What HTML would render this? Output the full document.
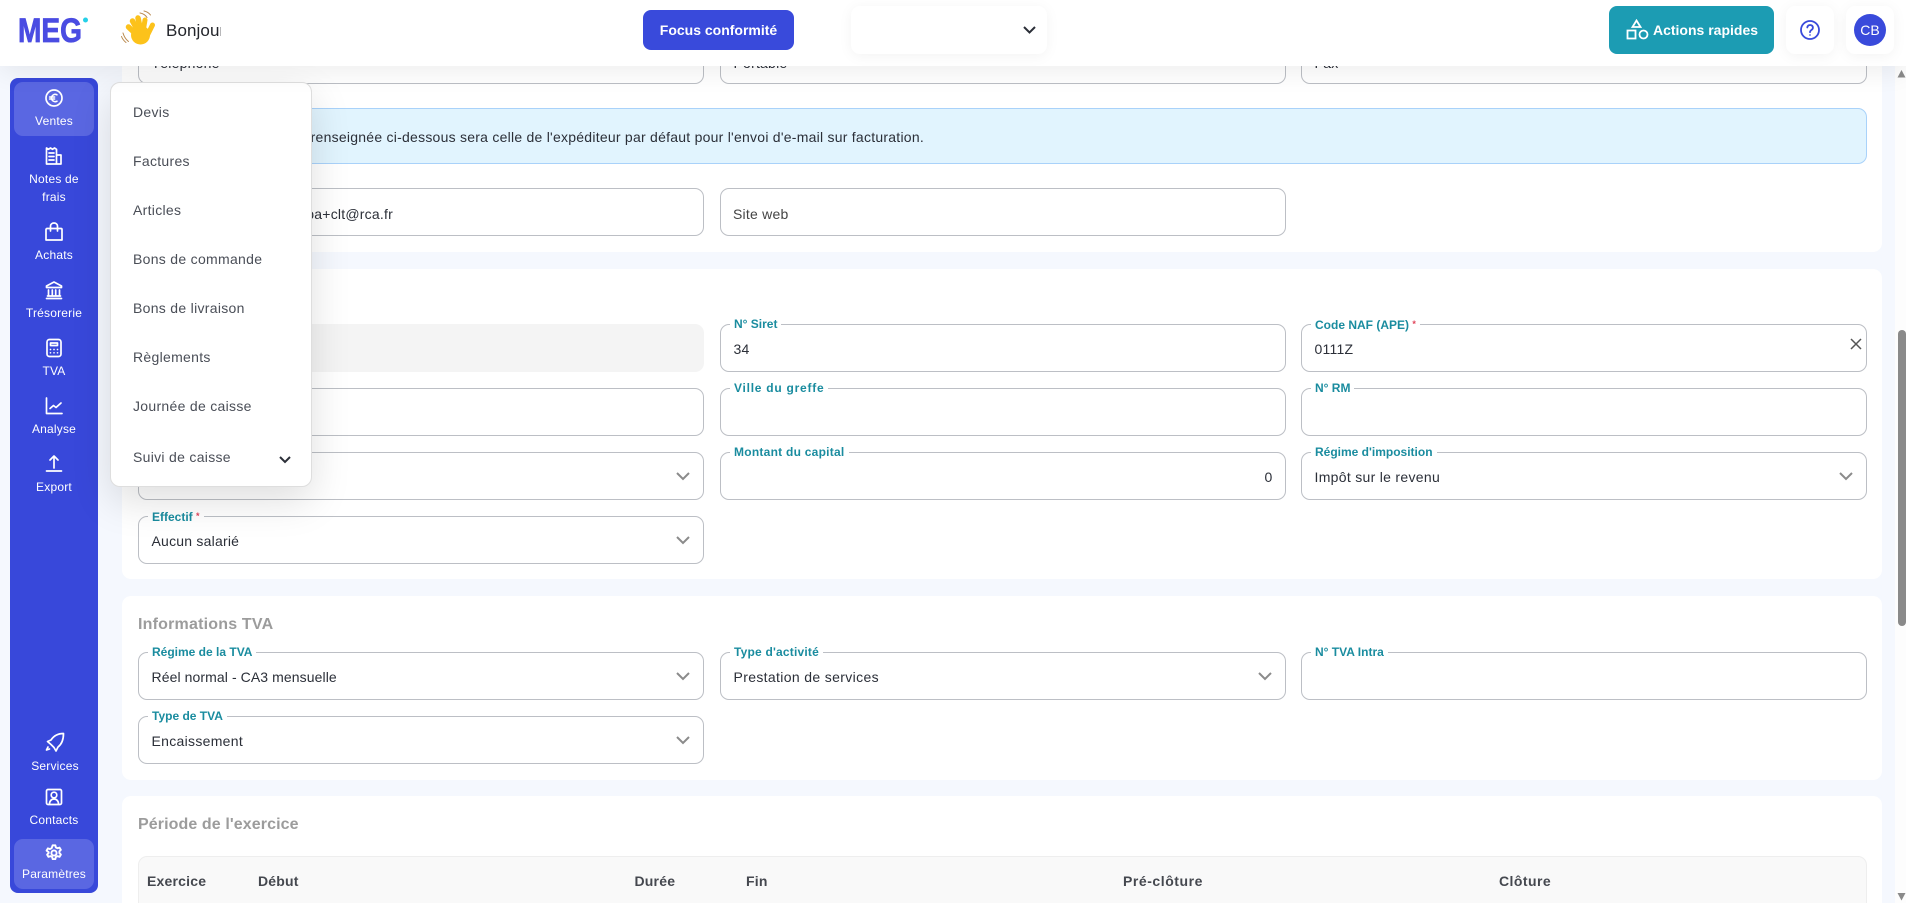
<!DOCTYPE html>
<html lang="fr">
<head>
<meta charset="utf-8">
<title>MEG</title>
<style>
*{box-sizing:border-box}
html,body{margin:0;padding:0;width:1906px;height:903px;overflow:hidden;background:#f5f8fe;font-family:"Liberation Sans",sans-serif;color:#2b2f38}
#page{position:relative;width:1906px;height:903px;overflow:hidden;background:#f5f8fe}
.a{position:absolute}
.card{position:absolute;left:122px;width:1760px;background:#fff;border-radius:9px}
.f{position:absolute;height:47.5px;width:565.5px;border:1px solid #bcbfc5;border-radius:9px;background:#fff}
.c1{left:138px}.c2{left:720px}.c3{left:1301px}
.l{position:absolute;left:9px;top:-8.5px;background:#fff;padding:0 4px;font-size:12px;line-height:15px;font-weight:700;color:#1a8c9f;white-space:nowrap}
.l i{color:#e0445a;font-style:normal;font-size:9px;vertical-align:2px}
.v{position:absolute;left:12.5px;top:14.5px;font-size:14px;line-height:18px;letter-spacing:.22px;color:#2b2f38;white-space:nowrap}
.chev{position:absolute;right:12px;top:15px}
.t{position:absolute;left:138px;font-size:16px;font-weight:700;color:#9c9c9c;line-height:20px;white-space:nowrap;letter-spacing:.2px}
.th{position:absolute;top:872px;font-size:14px;font-weight:700;color:#45484f;line-height:18px;letter-spacing:.2px}
#side{position:absolute;left:10px;top:78px;width:88px;height:815px;background:#3848da;border-radius:8px}
.act{position:absolute;left:14px;width:80px;background:#5a67e2;border-radius:9px}
.n{position:absolute;left:10px;width:88px;text-align:center;color:#fff;font-size:12px;line-height:18px;letter-spacing:.2px;white-space:nowrap}
.ic{position:absolute;fill:none;stroke:#fff;stroke-width:1.7;stroke-linecap:round;stroke-linejoin:round}
#hdr{position:absolute;left:0;top:0;width:1906px;height:66px;background:#fff;box-shadow:0 6px 26px rgba(0,0,0,.07)}
.btn{position:absolute;color:#fff;font-weight:700;font-size:14px;text-align:center;border-radius:8px;white-space:nowrap}
.wb{position:absolute;background:#fff;border-radius:9px;box-shadow:0 2px 14px rgba(0,0,0,.05)}
#menu{position:absolute;left:110px;top:82px;width:201.5px;height:404.5px;background:#fff;border:1px solid #dedede;border-radius:10px;box-shadow:0 14px 40px rgba(0,0,0,.13)}
.m{position:absolute;left:133px;font-size:14px;line-height:18px;letter-spacing:.3px;color:#4a4e57;white-space:nowrap}
</style>
</head>
<body>
<div id="page">

<!-- content cards -->
<div class="card" style="top:40px;height:212px"></div>
<div class="card" style="top:268.5px;height:310px"></div>
<div class="card" style="top:596px;height:184px"></div>
<div class="card" style="top:796px;height:120px"></div>

<!-- top row partially hidden -->
<div class="f c1" style="top:36px"><div class="v" style="top:16.5px">Téléphone</div></div>
<div class="f c2" style="top:36px"><div class="v" style="top:16.5px">Portable</div></div>
<div class="f c3" style="top:36px"><div class="v" style="top:16.5px">Fax</div></div>

<div class="a" style="left:138px;top:108px;width:1729px;height:56px;background:#e1f4fe;border:1px solid #a9d2fa;border-radius:9px"></div>
<div class="a" style="left:151px;top:128px;font-size:14px;line-height:18px;letter-spacing:.245px;color:#2b2f38;white-space:nowrap;width:773px;text-align:right">L'adresse e-mail renseignée ci-dessous sera celle de l'expéditeur par défaut pour l'envoi d'e-mail sur facturation.</div>

<div class="f c1" style="top:188px"><div class="v" style="left:auto;right:309.5px;top:15.5px">rpa+clt@rca.fr</div></div>
<div class="f c2" style="top:188px"><div class="v" style="top:16px;left:12px;color:#444">Site web</div></div>

<!-- section 2 -->
<div class="a" style="left:138px;top:324px;width:565.5px;height:47.5px;background:#f4f4f4;border-radius:9px"></div>
<div class="f c2" style="top:324px"><div class="l">N° Siret</div><div class="v">34</div></div>
<div class="f c3" style="top:324px"><div class="l">Code NAF (APE) <i>*</i></div><div class="v">0111Z</div>
 <svg class="a" style="right:3px;top:12px" width="14" height="14" viewBox="0 0 14 14" fill="none" stroke="#555" stroke-width="1.5"><path d="M2 2l10 10M12 2L2 12"/></svg></div>

<div class="f c1" style="top:388px"></div>
<div class="f c2" style="top:388px"><div class="l" style="letter-spacing:.75px">Ville du greffe</div></div>
<div class="f c3" style="top:388px"><div class="l">N° RM</div></div>

<div class="f c1" style="top:452px"><svg class="chev" width="16" height="16" viewBox="0 0 16 16" fill="none" stroke="#8b8b8b" stroke-width="2"><path d="M2 5l6 6 6-6"/></svg></div>
<div class="f c2" style="top:452px"><div class="l" style="letter-spacing:.25px">Montant du capital</div><div class="v" style="left:auto;right:12px">0</div></div>
<div class="f c3" style="top:452px"><div class="l">Régime d'imposition</div><div class="v" style="letter-spacing:.3px">Impôt sur le revenu</div><svg class="chev" width="16" height="16" viewBox="0 0 16 16" fill="none" stroke="#8b8b8b" stroke-width="2"><path d="M2 5l6 6 6-6"/></svg></div>

<div class="f c1" style="top:516px"><div class="l">Effectif <i>*</i></div><div class="v">Aucun salarié</div><svg class="chev" width="16" height="16" viewBox="0 0 16 16" fill="none" stroke="#8b8b8b" stroke-width="2"><path d="M2 5l6 6 6-6"/></svg></div>

<!-- TVA -->
<div class="t" style="top:615px">Informations TVA</div>
<div class="f c1" style="top:652px"><div class="l">Régime de la TVA</div><div class="v" style="letter-spacing:.09px">Réel normal - CA3 mensuelle</div><svg class="chev" width="16" height="16" viewBox="0 0 16 16" fill="none" stroke="#8b8b8b" stroke-width="2"><path d="M2 5l6 6 6-6"/></svg></div>
<div class="f c2" style="top:652px"><div class="l" style="letter-spacing:.2px">Type d'activité</div><div class="v" style="letter-spacing:.35px">Prestation de services</div><svg class="chev" width="16" height="16" viewBox="0 0 16 16" fill="none" stroke="#8b8b8b" stroke-width="2"><path d="M2 5l6 6 6-6"/></svg></div>
<div class="f c3" style="top:652px"><div class="l">N° TVA Intra</div></div>
<div class="f c1" style="top:716px"><div class="l">Type de TVA</div><div class="v" style="letter-spacing:.3px">Encaissement</div><svg class="chev" width="16" height="16" viewBox="0 0 16 16" fill="none" stroke="#8b8b8b" stroke-width="2"><path d="M2 5l6 6 6-6"/></svg></div>

<!-- Periode -->
<div class="t" style="top:815px;letter-spacing:.1px">Période de l'exercice</div>
<div class="a" style="left:138px;top:856px;width:1729px;height:70px;background:#f9f9f9;border:1px solid #eeeeee;border-radius:9px"></div>
<div class="th" style="left:147px">Exercice</div>
<div class="th" style="left:258px">Début</div>
<div class="th" style="left:634.5px">Durée</div>
<div class="th" style="left:746px">Fin</div>
<div class="th" style="left:1123px;letter-spacing:.55px">Pré-clôture</div>
<div class="th" style="left:1499px;letter-spacing:.45px">Clôture</div>

<!-- scrollbar -->
<div class="a" style="left:1895px;top:66px;width:11px;height:837px;background:#fdfdfd"></div>
<div class="a" style="left:1898px;top:330px;width:8px;height:296px;background:#8a8a8a;border-radius:4px"></div>
<svg class="a" style="left:1897px;top:70px" width="9" height="8"><path d="M4.500 0l4 7.500h-8z" fill="#8a8a8a"/></svg>
<svg class="a" style="left:1897px;top:893px" width="9" height="8"><path d="M.5 0h8l-4 7.500z" fill="#8a8a8a"/></svg>

<!-- sidebar -->
<div id="side"></div>
<div class="act" style="top:82px;height:54px"></div>
<div class="act" style="top:839px;height:50px"></div>

<svg class="ic" style="left:44px;top:88px" width="20" height="20" viewBox="0 0 20 20"><circle cx="10" cy="10" r="8"/><path d="M13 6.800a3.800 3.800 0 0 0-5.600 3.200 3.800 3.800 0 0 0 5.600 3.200M5.600 9h5M5.600 11h5" stroke-width="1.500"/></svg>
<div class="n" style="top:112px">Ventes</div>

<svg class="ic" style="left:44px;top:146px" width="20" height="20" viewBox="0 0 20 20"><path d="M2.500 2l2 1.300L6.500 2l2 1.300L10.500 2l2 1.300V18h-10zM12.500 9H17v9h-4.500M5 7h5M5 10.500h5M5 14h5"/></svg>
<div class="n" style="top:170px">Notes de</div>
<div class="n" style="top:188px">frais</div>

<svg class="ic" style="left:44px;top:222px" width="20" height="20" viewBox="0 0 20 20"><path d="M3 6.500h14a1 1 0 0 1 1 1V18H2V7.500a1 1 0 0 1 1-1zM6.500 9V4a3.500 3 0 0 1 7 0v5"/></svg>
<div class="n" style="top:246px">Achats</div>

<svg class="ic" style="left:44px;top:280px" width="20" height="20" viewBox="0 0 20 20"><path d="M10 2L2.500 6v1.500h15V6zM4.500 10v6M8.300 10v6M11.700 10v6M15.500 10v6M2.500 18.500h15M3.500 16h13"/></svg>
<div class="n" style="top:303.5px">Trésorerie</div>

<svg class="ic" style="left:44px;top:338px" width="20" height="20" viewBox="0 0 20 20"><rect x="3" y="1.500" width="14" height="17" rx="2.500"/><path d="M6.500 5h7v2.500h-7zM6.500 11.500h.01M10 11.500h.01M13.500 11.500h.01M6.500 14.800h.01M10 14.800h.01M13.500 14.800h.01"/></svg>
<div class="n" style="top:361.5px">TVA</div>

<svg class="ic" style="left:44px;top:396px" width="20" height="20" viewBox="0 0 20 20"><path d="M2.500 2v15.500h15.500M6 12.500l3.500-3 2.500 2 5-4.500"/></svg>
<div class="n" style="top:419.5px">Analyse</div>

<svg class="ic" style="left:44px;top:453px" width="20" height="20" viewBox="0 0 20 20"><path d="M10 15V3M6 7l4-4 4 4M2.500 18h15"/></svg>
<div class="n" style="top:477.5px">Export</div>

<svg class="ic" style="left:44px;top:731px" width="22" height="22" viewBox="0 0 22 22"><path d="M19.500 2.500C14.500 2.500 10 4.500 7 9l-3.500 1.500L7 13.500l3 3 2 3.500 2-4c4-3 5.500-8.500 5.500-13.500zM4 16l-1.500 3 3-1"/></svg>
<div class="n" style="top:757px;left:11px">Services</div>

<svg class="ic" style="left:44px;top:787px" width="20" height="20" viewBox="0 0 20 20"><rect x="2.500" y="2.500" width="15" height="15" rx="1.500"/><circle cx="10" cy="8" r="2.800"/><path d="M5.500 17c0-3 2-5 4.500-5s4.500 2 4.500 5"/></svg>
<div class="n" style="top:811px">Contacts</div>

<svg class="ic" style="left:45px;top:844px" width="18" height="18" viewBox="0 0 16 16" stroke-width=".8" style="stroke-width:.8"><circle cx="8" cy="8" r="2.300"/><path d="M6.800 1.200h2.400l.4 1.800 1.500.8 1.800-.6 1.200 2-1.300 1.300v1.600l1.300 1.300-1.200 2-1.800-.6-1.500.8-.4 1.800H6.800l-.4-1.800-1.500-.8-1.800.6-1.200-2 1.300-1.300V7.200L1.400 5.900l1.200-2 1.800.6 1.500-.8z"/></svg>
<div class="n" style="top:865px">Paramètres</div>

<!-- menu -->
<div id="menu"></div>
<div class="m" style="top:103px">Devis</div>
<div class="m" style="top:152px">Factures</div>
<div class="m" style="top:201px">Articles</div>
<div class="m" style="top:250px">Bons de commande</div>
<div class="m" style="top:299px">Bons de livraison</div>
<div class="m" style="top:348px">Règlements</div>
<div class="m" style="top:397px">Journée de caisse</div>
<div class="m" style="top:448px">Suivi de caisse</div>
<svg class="a" style="left:279px;top:455px" width="12" height="10" viewBox="0 0 12 10" fill="none" stroke="#2b2f38" stroke-width="2"><path d="M1 2l5 5 5-5"/></svg>

<!-- header -->
<div id="hdr"></div>
<svg class="a" style="left:16px;top:14px" width="76" height="32" viewBox="0 0 76 32">
 <text x="2" y="28" font-family="Liberation Sans, sans-serif" font-weight="700" font-size="34" fill="#4a4ce2" stroke="#4a4ce2" stroke-width=".8" textLength="64" lengthAdjust="spacingAndGlyphs">MEG</text>
 <circle cx="69.500" cy="6" r="2.500" fill="#25d0e8"/>
</svg>

<svg class="a" style="left:120px;top:10px" width="38" height="36" viewBox="0 0 38 36" fill="none" stroke-linecap="round">
 <path d="M20 3c3 .5 5.500 2 7 4.500M24 1c3 .6 5 2 6.500 4M3 23c1 3.500 3 6.500 5.500 8.500M1.500 26.500c1 2.500 2.500 4.500 4.500 6" stroke="#b98a4e" stroke-width="1"/>
 <g stroke="#fcc21b">
  <path d="M17 25L8.500 17" stroke-width="5.500"/>
  <path d="M19 23L12.500 11" stroke-width="5.500"/>
  <path d="M21 22L18 8" stroke-width="5.500"/>
  <path d="M23 22L25 10" stroke-width="5"/>
  <path d="M27 26L32.500 15" stroke-width="5"/>
 </g>
 <circle cx="20.500" cy="25" r="9.500" fill="#fcc21b"/>
</svg>
<div class="a" style="left:166px;top:21px;width:55px;overflow:hidden;font-size:17px;line-height:20px;color:#23252b;white-space:nowrap;letter-spacing:.1px">Bonjour Christophe</div>

<div class="btn" style="left:643px;top:10px;width:151px;height:40px;background:#394adb;line-height:40px">Focus conformité</div>

<div class="wb" style="left:851px;top:6px;width:196px;height:48px"></div>
<svg class="a" style="left:1023px;top:25px" width="13" height="10" viewBox="0 0 13 10" fill="none" stroke="#2b2f38" stroke-width="2"><path d="M1 2l5.500 5.500L12 2"/></svg>

<div class="btn" style="left:1609px;top:6px;width:165px;height:48px;background:#1c9cb3;line-height:48px;padding-left:28px">Actions rapides</div>
<svg class="a" style="left:1626px;top:19px" width="23" height="21" viewBox="0 0 23 21" fill="none" stroke="#fff" stroke-width="1.800"><path d="M10.500 1.500l4 6.500h-8zM1.500 11.500h8v8h-8z"/><circle cx="17.500" cy="15.500" r="4"/></svg>

<div class="wb" style="left:1786px;top:6px;width:48px;height:48px"></div>
<svg class="a" style="left:1799px;top:19px" width="22" height="22" viewBox="0 0 22 22" fill="none" stroke="#394adb" stroke-width="1.800"><circle cx="11" cy="11" r="9"/><path d="M8.300 8.500a2.800 2.600 0 1 1 4.300 2.300c-1 .7-1.600 1.200-1.600 2.400" stroke-linecap="round"/><path d="M11 15.500v1" stroke-width="2"/></svg>

<div class="wb" style="left:1846px;top:6px;width:48px;height:48px"></div>
<div class="a" style="left:1854px;top:14px;width:32px;height:32px;border-radius:50%;background:#394adb;color:#fff;font-size:14px;line-height:32px;text-align:center">CB</div>

</div>
</body>
</html>
